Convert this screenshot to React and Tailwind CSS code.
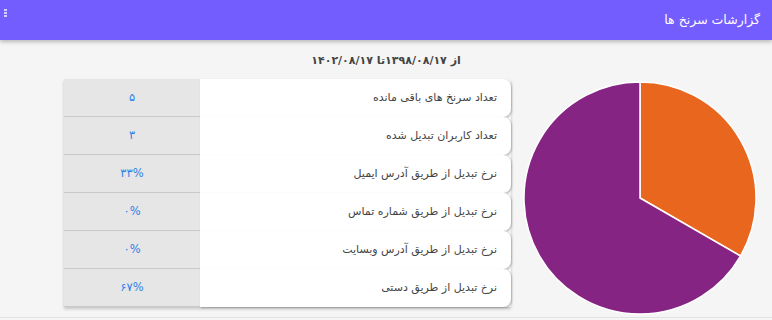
import React from "react";

const rows = [
  { label: "تعداد سرنخ های باقی مانده", value: "۵" },
  { label: "تعداد کاربران تبدیل شده", value: "۳" },
  { label: "نرخ تبدیل از طریق آدرس ایمیل", value: "۳۳%" },
  { label: "نرخ تبدیل از طریق شماره تماس", value: "۰%" },
  { label: "نرخ تبدیل از طریق آدرس وبسایت", value: "۰%" },
  { label: "نرخ تبدیل از طریق دستی", value: "۶۷%" },
];

const PieChart = () => {
  // center 116,116 radius 116; orange slice 1/3 from top clockwise
  const r = 116;
  const a = (120 * Math.PI) / 180;
  const x = r + r * Math.sin(a);
  const y = r - r * Math.cos(a);
  return (
    <svg width="234" height="234" viewBox="-1 -1 234 234">
      <path d={`M${r} ${r} L${r} 0 A${r} ${r} 0 0 1 ${x} ${y} Z`} fill="#e9661e" stroke="#fff" strokeWidth="1.5" />
      <path d={`M${r} ${r} L${x} ${y} A${r} ${r} 0 1 1 ${r} 0 Z`} fill="#862484" stroke="#fff" strokeWidth="1.5" />
    </svg>
  );
};

const App = () => {
  return (
    <div dir="rtl" className="w-[772px] h-[320px] bg-[#f5f5f5] overflow-hidden" style={{ fontFamily: '"DejaVu Sans", sans-serif' }}>
      <div className="h-[318px] border-b border-[#e2e2e2]">
        {/* header */}
        <div className="h-10 bg-[#735dff] flex items-center justify-between pr-[12px] pl-[4px] shadow-[0_2px_4px_rgba(0,0,0,0.25)] relative">
          <span className="text-white text-[12.5px]">گزارشات سرنخ ها</span>
          <div className="flex flex-col gap-[1px] self-start mt-[9px]">
            <span className="w-[3px] h-[2px] bg-white/70"></span>
            <span className="w-[3px] h-[2px] bg-white/70"></span>
            <span className="w-[3px] h-[2px] bg-white/70"></span>
          </div>
        </div>

        {/* date range */}
        <div className="h-[39px] flex items-center justify-center pt-[4px]">
          <span className="text-[11px] font-bold text-[#444]">از ۱۳۹۸/۰۸/۱۷تا ۱۴۰۲/۰۸/۱۷</span>
        </div>

        <div className="flex items-start pr-[15px] gap-[12px]">
          <div className="mt-[2px]">
            <PieChart />
          </div>

          <div className="w-[447px] shadow-[0_2px_3px_rgba(0,0,0,0.2)]">
            {rows.map((row, i) => (
              <div key={i} className="flex h-[38px]">
                <div className="w-[311px] bg-white rounded-r-[8px] flex items-center pr-[14px] text-[11px] text-[#444] shadow-[1px_1px_2px_rgba(0,0,0,0.25)] relative z-10">
                  {row.label}
                </div>
                <div className="flex-1 bg-[#e6e6e6] border-b border-[#c9c9c9] flex items-center justify-center text-[11.5px] text-[#2f7fe6]">
                  {row.value}
                </div>
              </div>
            ))}
          </div>
        </div>
      </div>
    </div>
  );
};

export default App;
